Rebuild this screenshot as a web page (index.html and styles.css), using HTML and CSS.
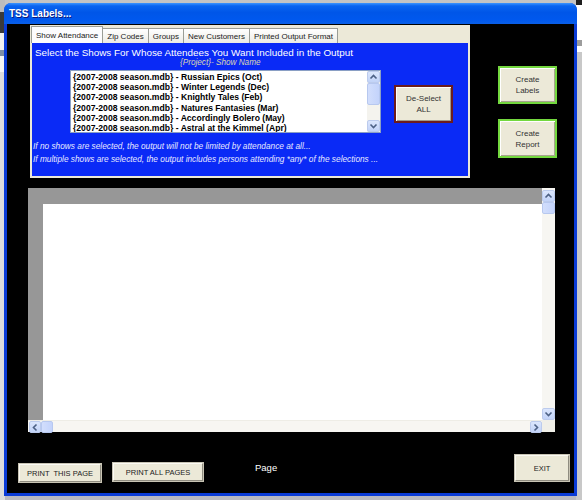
FILE: index.html
```html
<!DOCTYPE html>
<html>
<head>
<meta charset="utf-8">
<title>TSS Labels</title>
<link rel="stylesheet" href="styles.css">
</head>
<body>
<div class="desktop">
  <div class="bg-left"></div>
  <div class="bg-right"></div>
  <div class="window">
    <div class="titlebar"><span>TSS Labels...</span></div>
    <div class="client">
      <div class="top">
        <div class="tabctl">
          <div class="tabs">
            <div class="tab active">Show Attendance</div>
            <div class="tab">Zip Codes</div>
            <div class="tab">Groups</div>
            <div class="tab">New Customers</div>
            <div class="tab">Printed Output Format</div>
          </div>
          <div class="panel">
            <div class="heading">Select the Shows For Whose Attendees You Want Included in the Output</div>
            <div class="sub">{Project}- Show Name</div>
            <div class="listrow">
              <div class="listbox">
                <ul class="items">
                  <li>{2007-2008 season.mdb} - Russian Epics (Oct)</li>
                  <li>{2007-2008 season.mdb} - Winter Legends (Dec)</li>
                  <li>{2007-2008 season.mdb} - Knightly Tales (Feb)</li>
                  <li>{2007-2008 season.mdb} - Natures Fantasies (Mar)</li>
                  <li>{2007-2008 season.mdb} - Accordingly Bolero (May)</li>
                  <li>{2007-2008 season.mdb} - Astral at the Kimmel (Apr)</li>
                </ul>
                <div class="lscroll">
                  <div class="sbtn"><svg width="11" height="10" viewBox="0 0 11 10"><path d="M2.5 6.5 L5.5 3.5 L8.5 6.5" fill="none" stroke="#4d6185" stroke-width="1.6"/></svg></div>
                  <div class="sthumb"></div>
                  <div class="strack"></div>
                  <div class="sbtn"><svg width="11" height="10" viewBox="0 0 11 10"><path d="M2.5 3.5 L5.5 6.5 L8.5 3.5" fill="none" stroke="#4d6185" stroke-width="1.6"/></svg></div>
                </div>
              </div>
              <button class="btn deselect">De-Select<br>ALL</button>
            </div>
            <p class="note first">If no shows are selected, the output will not be limited by attendance at all...</p>
            <p class="note">If multiple shows are selected, the output includes persons attending *any* of the selections ...</p>
          </div>
        </div>
        <div class="side">
          <button class="btn green">Create<br>Labels</button>
          <button class="btn green">Create<br>Report</button>
        </div>
      </div>
      <div class="preview">
        <div class="pv-main"><div class="pv-page"></div></div>
        <div class="pv-vscroll">
          <div class="sbtn"><svg width="11" height="10" viewBox="0 0 11 10"><path d="M2.5 6.5 L5.5 3.5 L8.5 6.5" fill="none" stroke="#4d6185" stroke-width="1.6"/></svg></div>
          <div class="sthumb v"></div>
          <div class="strack"></div>
          <div class="sbtn"><svg width="11" height="10" viewBox="0 0 11 10"><path d="M2.5 3.5 L5.5 6.5 L8.5 3.5" fill="none" stroke="#4d6185" stroke-width="1.6"/></svg></div>
        </div>
        <div class="pv-hscroll">
          <div class="sbtn h"><svg width="10" height="11" viewBox="0 0 10 11"><path d="M6.5 2.5 L3.5 5.5 L6.5 8.5" fill="none" stroke="#4d6185" stroke-width="1.6"/></svg></div>
          <div class="sthumb h"></div>
          <div class="strack"></div>
          <div class="sbtn h"><svg width="10" height="11" viewBox="0 0 10 11"><path d="M3.5 2.5 L6.5 5.5 L3.5 8.5" fill="none" stroke="#4d6185" stroke-width="1.6"/></svg></div>
        </div>
        <div class="pv-corner"></div>
      </div>
      <div class="bottom">
        <button class="btn print1">PRINT&nbsp; THIS PAGE</button>
        <button class="btn print2">PRINT ALL PAGES</button>
        <span class="pagelabel">Page</span>
        <button class="btn exit">EXIT</button>
      </div>
    </div>
  </div>
</div>
</body>
</html>
```
FILE: styles.css
```css
* { box-sizing: border-box; }

body {
  margin: 0;
  background: #cfcfcf;
  font-family: "Liberation Sans", Arial, sans-serif;
}

.desktop {
  position: relative;
  width: 582px;
  height: 500px;
  overflow: hidden;
  background: linear-gradient(#c4c4c4, #b8b8c0);
}

.bg-left {
  position: absolute;
  left: 0;
  top: 0;
  width: 5px;
  height: 500px;
  background: linear-gradient(#bdbdbd 0, #bdbdbd 12px, #3a3a3a 12px, #3a3a3a 33px, #f2f2f2 33px, #f2f2f2 50px, #7e8ea6 50px, #7e8ea6 56px, #f6f6f6 56px, #f6f6f6 72px, #dcdcdc 72px, #dcdcdc 100%);
}

.bg-right {
  position: absolute;
  right: 0;
  top: 0;
  width: 6px;
  height: 500px;
  background: linear-gradient(#1e1e1e 0, #1e1e1e 5px, #ffffff 5px, #ffffff 40px, #9c9c9c 40px, #9c9c9c 46px, #ffffff 46px, #ffffff 52px, #c8c8c8 52px, #c8c8c8 100%);
}

.window {
  position: absolute;
  left: 4px;
  top: 3px;
  width: 573px;
  height: 493px;
  display: flex;
  flex-direction: column;
  border-radius: 7px 7px 0 0;
  overflow: hidden;
  background: #0a3bd6;
}

.titlebar {
  height: 21px;
  flex: none;
  display: flex;
  align-items: center;
  padding-left: 5px;
  color: #fff;
  font-weight: bold;
  font-size: 10px;
  text-shadow: 1px 1px 0 #0a1a80;
  background: linear-gradient(#3d95ff 0%, #0a64f0 14%, #0056e8 45%, #0058ee 80%, #0a5fe6 100%);
}

.client {
  flex: 1;
  margin: 0 3px 3px 3px;
  background: #000;
  display: flex;
  flex-direction: column;
}

/* ---------- top row ---------- */
.top {
  display: flex;
  height: 154px;
  flex: none;
  padding-left: 23px;
}

.tabctl {
  margin-top: 1px;
  width: 440px;
  height: 153px;
  background: #ece9d8;
  display: flex;
  flex-direction: column;
}

.tabs {
  display: flex;
  align-items: flex-end;
  height: 18px;
  padding-left: 1px;
  flex: none;
}

.tab {
  height: 15px;
  padding: 0 4px;
  display: flex;
  align-items: center;
  font-size: 8px;
  color: #222;
  background: linear-gradient(#ffffff, #ecebe5);
  border: 1px solid #9a9d96;
  border-bottom: none;
  margin-right: -1px;
}

.tab.active {
  height: 17px;
  background: #fcfcfe;
  position: relative;
  z-index: 1;
}

.panel {
  flex: 1;
  margin: 0 2px 2px 2px;
  background: #0a2af6;
  display: flex;
  flex-direction: column;
}

.heading {
  color: #fff;
  font-size: 9.9px;
  line-height: 11px;
  padding: 4px 0 0 3px;
  white-space: nowrap;
}

.sub {
  color: #dcd6b0;
  font-size: 8.2px;
  font-style: italic;
  line-height: 9px;
  padding-left: 148px;
  white-space: nowrap;
}

.listrow {
  display: flex;
  align-items: flex-start;
  padding-left: 38px;
  margin-top: 3px;
}

.listbox {
  width: 311px;
  height: 63px;
  background: #fff;
  border: 1px solid #8a9fc4;
  display: flex;
}

.items {
  flex: 1;
  list-style: none;
  margin: 0;
  padding: 1px 0 0 2px;
  font-size: 8.6px;
  font-weight: bold;
  line-height: 10.2px;
  color: #000;
  white-space: nowrap;
  overflow: hidden;
}

.lscroll, .pv-vscroll {
  width: 13px;
  display: flex;
  flex-direction: column;
  background: #f4f3ee;
}

.pv-hscroll {
  display: flex;
  background: #f4f3ee;
}

.sbtn {
  flex: none;
  width: 13px;
  height: 12px;
  display: flex;
  align-items: center;
  justify-content: center;
  background: linear-gradient(#dbe6fd, #c2d3f8);
  border: 1px solid #bccbed;
  border-radius: 2px;
}

.sbtn.h {
  width: 12px;
  height: 12px;
}

.sthumb {
  flex: none;
  height: 22px;
  background: linear-gradient(90deg, #d2defc, #c3d3fb);
  border: 1px solid #b7c8ef;
  border-radius: 2px;
}

.sthumb.v {
  height: 12px;
}

.sthumb.h {
  width: 12px;
  height: 12px;
}

.strack {
  flex: 1;
}

.btn {
  font-family: "Liberation Sans", Arial, sans-serif;
  color: #222;
  background: #ece9d8;
  padding: 0;
  line-height: 11px;
  cursor: default;
}

.deselect {
  margin: 15px 0 0 13px;
  width: 59px;
  height: 38px;
  font-size: 8px;
  color: #333;
  border: 2px solid #6c1c1c;
  box-shadow: inset 1px 1px 0 #fff, inset -1px -1px 0 #a09a88;
}

.note {
  margin: 0;
  color: #e6e8ff;
  font-size: 8.3px;
  font-style: italic;
  line-height: 13px;
  padding-left: 1px;
  white-space: nowrap;
}

.note.first {
  margin-top: 7px;
}

.side {
  margin: 42px 0 0 28px;
  display: flex;
  flex-direction: column;
  gap: 15px;
}

.green {
  width: 59px;
  height: 38px;
  font-size: 8px;
  color: #333;
  border: 2px solid #74d83f;
  box-shadow: inset 1px 1px 0 #fff, inset -1px -1px 0 #a8a490;
}

.green + .green {
  height: 39px;
}

/* ---------- preview ---------- */
.preview {
  flex: none;
  margin: 10px 0 0 21px;
  width: 527px;
  height: 244px;
  display: grid;
  grid-template-columns: 1fr 13px;
  grid-template-rows: 1fr 12px;
}

.pv-main {
  background: #979797;
  padding: 16px 0 0 15px;
}

.pv-page {
  background: #fff;
  height: 100%;
}

.pv-vscroll {
  padding-top: 2px;
  width: 13px;
  background: #f7f6f2;
}

.pv-hscroll {
  background: #f7f6f2;
  padding-left: 1px;
  border-top: 1px solid #eeede6;
}

.pv-corner {
  background: #f0efe8;
}

/* ---------- bottom ---------- */
.bottom {
  flex: 1;
  display: flex;
  align-items: flex-end;
  padding: 0 5px 11px 12px;
}

.print1, .print2, .exit {
  font-size: 7.5px;
  border: 1px solid;
  border-color: #fbfaf4 #8f8c80 #8f8c80 #fbfaf4;
  box-shadow: 0 0 0 1px #c8c4b4;
}

.print1 {
  width: 82px;
  height: 18px;
}

.print2 {
  width: 90px;
  height: 18px;
  margin: 0 0 1px 12px;
}

.pagelabel {
  color: #fff;
  font-size: 9.5px;
  line-height: 11px;
  margin: 0 0 9px 52px;
}

.exit {
  margin: 0 0 1px auto;
  width: 54px;
  height: 26px;
}
```
